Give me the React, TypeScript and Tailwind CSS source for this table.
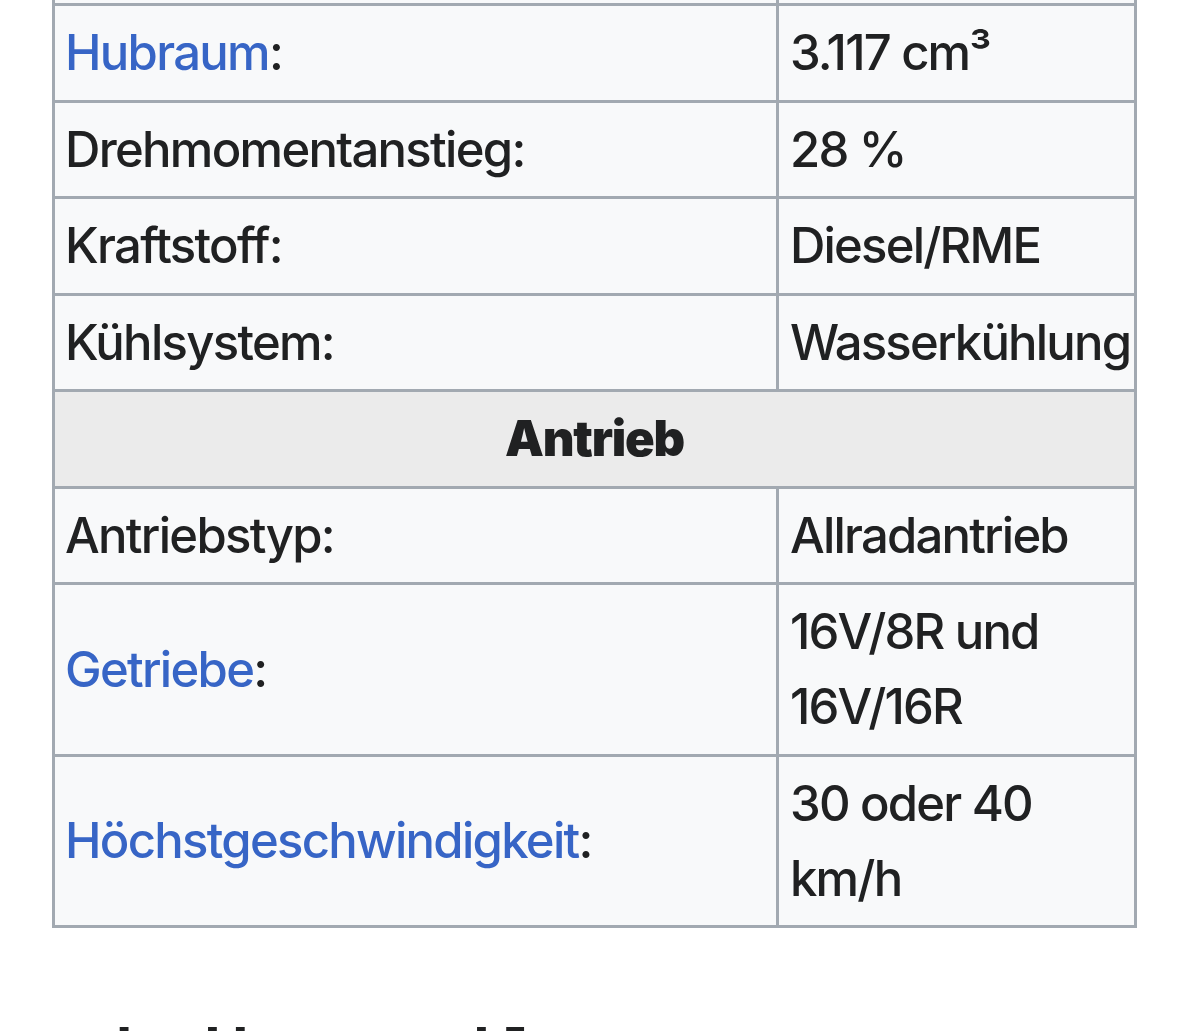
import React from "react";

type Row =
  | { kind: "row"; label: string; link?: boolean; value: React.ReactNode; tall?: boolean }
  | { kind: "head"; label: string };

const rows: Row[] = [
  { kind: "row", label: "", value: "" },
  { kind: "row", label: "Hubraum", link: true, value: <>3.117 cm³</> },
  { kind: "row", label: "Drehmomentanstieg", value: "28 %" },
  { kind: "row", label: "Kraftstoff", value: "Diesel/RME" },
  { kind: "row", label: "Kühlsystem", value: "Wasserkühlung" },
  { kind: "head", label: "Antrieb" },
  { kind: "row", label: "Antriebstyp", value: "Allradantrieb" },
  { kind: "row", label: "Getriebe", link: true, value: "16V/8R und 16V/16R", tall: true },
  { kind: "row", label: "Höchstgeschwindigkeit", link: true, value: "30 oder 40 km/h", tall: true },
];

export default function App() {
  return (
    <div
      className="w-[1200px] h-[1031px] overflow-hidden bg-white text-[#202122]"
      style={{ fontFamily: "Inter, 'Noto Sans', sans-serif" }}
    >
      <div className="ml-[52px] mt-[-93.5px] w-[1085px] bg-[#a2a9b1] p-[3px] grid grid-cols-[721px_355px] gap-[3px]">
        {rows.map((r, i) =>
          r.kind === "head" ? (
            <div
              key={i}
              className="col-span-2 bg-[#ebebeb] flex items-center justify-center py-[9.25px] leading-[75px] text-[49px] font-black tracking-[-1.2px]"
            >
              {r.label}
            </div>
          ) : (
            <React.Fragment key={i}>
              <div className="bg-[#f8f9fa] flex items-center px-[10px] py-[9.25px] leading-[75px] text-[49px] font-medium tracking-[-1.7px] min-h-[93.5px]">
                {r.label === "" ? null : r.link ? (
                  <>
                    <span className="text-[#3765c6]">{r.label}</span>:
                  </>
                ) : (
                  <>{r.label}:</>
                )}
              </div>
              <div className="bg-[#f8f9fa] flex items-center pl-[11px] pr-[4px] py-[9.25px] leading-[75px] text-[49px] font-medium tracking-[-1.8px]">
                <span>{r.value}</span>
              </div>
            </React.Fragment>
          )
        )}
      </div>
      <div
        className="mt-[97px] text-[64px] font-bold leading-none whitespace-nowrap"
        style={{ fontFamily: "'Liberation Mono', monospace" }}
      >
        Technik Details
      </div>
    </div>
  );
}
